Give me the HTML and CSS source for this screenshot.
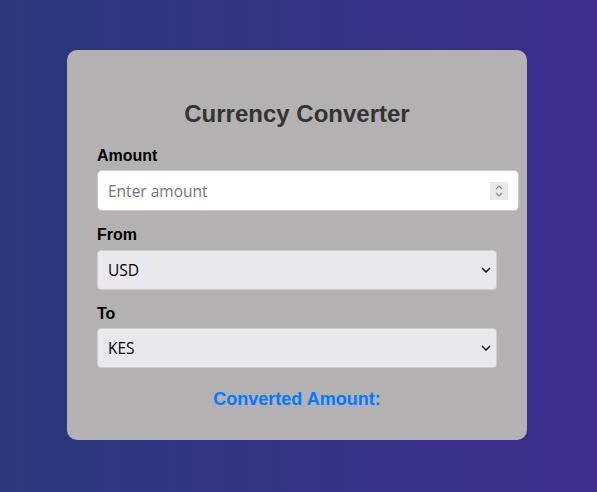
FILE: index.html
```html
<!DOCTYPE html>
<html lang="en">
<head>
<meta charset="utf-8">
<title>Currency Converter</title>
<link rel="stylesheet" href="styles.css">
</head>
<body>
  <main class="card">
    <h2 class="title">Currency Converter</h2>
    <label class="label" for="amount">Amount</label>
    <div class="input-wrap">
      <input class="input" id="amount" type="number" placeholder="Enter amount">
      <span class="spin" aria-hidden="true">
        <svg width="10" height="14" viewBox="0 0 10 14"><path d="M2 5 L5 2 L8 5 M2 9 L5 12 L8 9" fill="none" stroke="#8a8a8f" stroke-width="1.2"/></svg>
      </span>
    </div>
    <label class="label" for="from">From</label>
    <div class="select">
      <span>USD</span>
      <svg width="10" height="6" viewBox="0 0 10 6"><path d="M1 1 L5 5 L9 1" fill="none" stroke="#111" stroke-width="1.5"/></svg>
    </div>
    <label class="label" for="to">To</label>
    <div class="select">
      <span>KES</span>
      <svg width="10" height="6" viewBox="0 0 10 6"><path d="M1 1 L5 5 L9 1" fill="none" stroke="#111" stroke-width="1.5"/></svg>
    </div>
    <h3 class="result">Converted Amount:</h3>
  </main>
</body>
</html>
```
FILE: styles.css
```css
html, body {
  margin: 0;
  height: 100%;
}
body {
  background: linear-gradient(to right, #29387b, #3d2c8d);
  display: flex;
  align-items: center;
  justify-content: center;
  padding-right: 3px;
  padding-bottom: 2px;
  box-sizing: border-box;
  font-family: "Liberation Sans", Arial, sans-serif;
}
.card {
  width: 400px;
  height: 330px;
  padding: 30px;
  background: #b3b1b2;
  border-radius: 10px;
  display: flex;
  flex-direction: column;
  align-items: flex-start;
}
.title {
  align-self: stretch;
  text-align: center;
  font-size: 24px;
  font-weight: bold;
  color: #333333;
  margin: 20px 0 19.5px;
  line-height: 27px;
}
.label {
  font-size: 16px;
  font-weight: bold;
  color: #000;
  line-height: 18.5px;
  margin-bottom: 5px;
}
.input-wrap {
  position: relative;
  margin-bottom: 15px;
}
.input {
  width: 400px;
  height: 19px;
  padding: 10px;
  border: 1px solid #cccccc;
  border-radius: 5px;
  background: #ffffff;
  font-family: "Open Sans", sans-serif;
  font-size: 15.5px;
  color: #000;
  outline: none;
  display: block;
  -moz-appearance: textfield;
}
.input::-webkit-inner-spin-button,
.input::-webkit-outer-spin-button {
  -webkit-appearance: none;
  margin: 0;
}
.input::placeholder {
  color: #757575;
}
.spin {
  position: absolute;
  left: 393px;
  top: 12px;
  width: 18px;
  height: 18px;
  background: #e9e8ed;
  display: flex;
  align-items: center;
  justify-content: center;
}
.select {
  width: 400px;
  height: 40px;
  box-sizing: border-box;
  border: 1px solid #cdcdd0;
  border-radius: 4px;
  background: #e9e8ed;
  display: flex;
  align-items: center;
  justify-content: space-between;
  padding: 0 5px 0 10px;
  margin-bottom: 15px;
  font-family: "Open Sans", sans-serif;
  font-size: 15.5px;
  color: #000;
}
.result {
  align-self: stretch;
  text-align: center;
  margin: 6px 0 0;
  font-size: 18px;
  font-weight: bold;
  color: #007bff;
  line-height: 21px;
}
```
